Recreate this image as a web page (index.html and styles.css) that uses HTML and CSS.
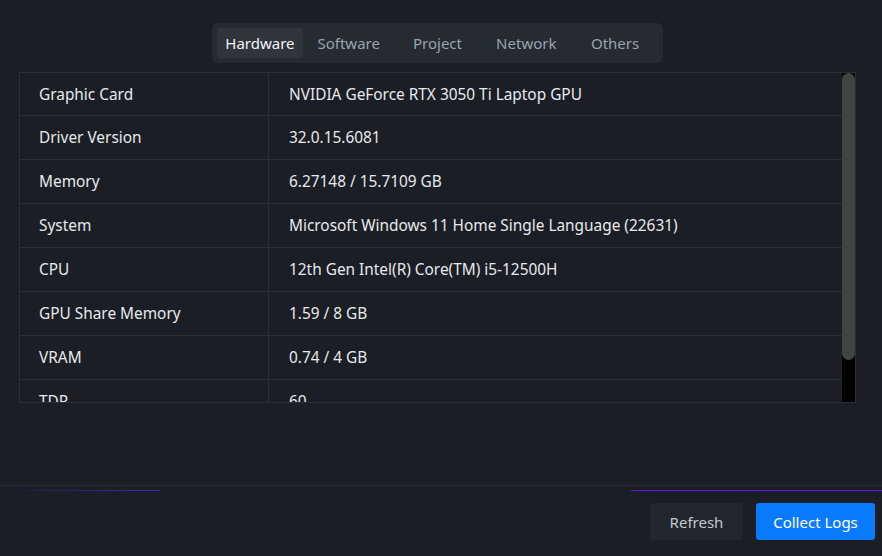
FILE: index.html
```html
<!DOCTYPE html>
<html lang="en">
<head>
<meta charset="utf-8">
<title>System Info</title>
<link rel="stylesheet" href="styles.css">
</head>
<body>
<div class="app">
  <div class="content">
    <nav class="tabs">
      <div class="tab active">Hardware</div>
      <div class="tab">Software</div>
      <div class="tab">Project</div>
      <div class="tab">Network</div>
      <div class="tab">Others</div>
    </nav>
    <div class="table-wrap">
      <div class="table-scroll">
        <div class="row"><div class="cell key">Graphic Card</div><div class="cell val">NVIDIA GeForce RTX 3050 Ti Laptop GPU</div></div>
        <div class="row"><div class="cell key">Driver Version</div><div class="cell val">32.0.15.6081</div></div>
        <div class="row"><div class="cell key">Memory</div><div class="cell val">6.27148 / 15.7109 GB</div></div>
        <div class="row"><div class="cell key">System</div><div class="cell val">Microsoft Windows 11 Home Single Language (22631)</div></div>
        <div class="row"><div class="cell key">CPU</div><div class="cell val">12th Gen Intel(R) Core(TM) i5-12500H</div></div>
        <div class="row"><div class="cell key">GPU Share Memory</div><div class="cell val">1.59 / 8 GB</div></div>
        <div class="row"><div class="cell key">VRAM</div><div class="cell val">0.74 / 4 GB</div></div>
        <div class="row"><div class="cell key">TDP</div><div class="cell val">60</div></div>
      </div>
      <div class="scrollbar"><div class="thumb"></div></div>
    </div>
  </div>
  <footer class="footer">
    <div class="progress"></div>
    <div class="actions">
      <button class="btn btn-secondary">Refresh</button>
      <button class="btn btn-primary">Collect Logs</button>
    </div>
  </footer>
</div>
</body>
</html>
```

FILE: styles.css
```css
* { box-sizing: border-box; }
html, body {
  margin: 0;
  padding: 0;
  background: #1b1e25;
  font-family: "Noto Sans", "Open Sans", sans-serif;
  font-size: 15px;
  color: #e8e9eb;
}
.app {
  height: 556px;
  display: flex;
  flex-direction: column;
}
.content {
  width: 837px;
  margin-left: 19px;
  padding-top: 23px;
  display: flex;
  flex-direction: column;
  align-items: center;
}
.tabs {
  width: 451px;
  height: 40px;
  padding: 5px;
  display: flex;
  gap: 3px;
  background: #262a31;
  border-radius: 6px;
}
.tab {
  flex: 1;
  display: flex;
  align-items: center;
  justify-content: center;
  border-radius: 3px;
  color: #9aa3ae;
  white-space: nowrap;
}
.tab.active {
  background: #30343c;
  color: #f2f3f5;
}
.table-wrap {
  margin-top: 9px;
  width: 100%;
  height: 331px;
  border: 1px solid #2b2f37;
  display: flex;
}
.table-scroll {
  flex: 1;
  height: 100%;
  overflow: hidden;
  font-size: 15.4px;
}
.scrollbar {
  width: 13px;
  height: 100%;
  background: #000;
  display: flex;
  flex-direction: column;
}
.thumb {
  height: 287px;
  background: #434343;
  border-radius: 7px;
}
.row {
  display: flex;
  height: 44px;
  border-bottom: 1px solid #2b2f37;
}
.row:first-child { height: 43px; }
.cell {
  display: flex;
  align-items: center;
  white-space: nowrap;
}
.key {
  width: 249px;
  flex: none;
  padding-left: 19px;
  border-right: 1px solid #2b2f37;
}
.val {
  padding-left: 20px;
}
.footer {
  margin-top: auto;
  border-top: 1px solid #272a32;
  padding: 4px 0 16px;
}
.progress {
  height: 1px;
  background: linear-gradient(to right, #1b1e25 0, #4a22c8 160px, transparent 160px, transparent 631px, #6414ff 631px);
}
.actions {
  margin-top: 12px;
  padding-right: 7px;
  display: flex;
  justify-content: flex-end;
  gap: 13px;
}
.btn {
  height: 37px;
  border: none;
  border-radius: 3px;
  font-family: inherit;
  font-size: 15px;
  padding: 0;
}
.btn-secondary {
  width: 93px;
  background: #23262d;
  color: #c3c7cd;
}
.btn-primary {
  width: 119px;
  background: #0a7bff;
  color: #ffffff;
}
```
